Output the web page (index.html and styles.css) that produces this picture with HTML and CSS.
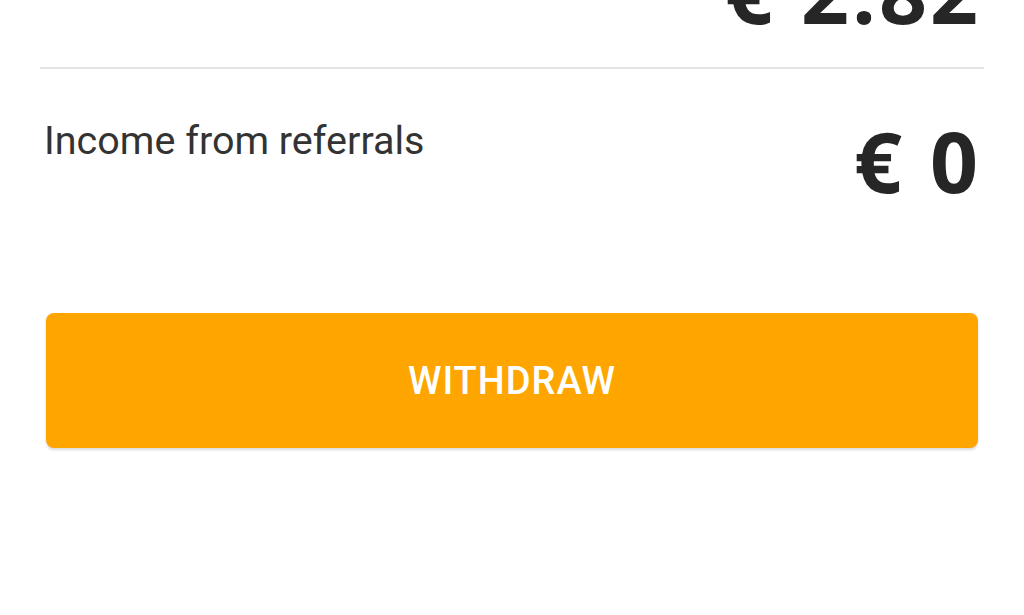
FILE: index.html
```html
<!DOCTYPE html>
<html>
  <head>
    <title>Wallet</title>
    <meta charset="UTF-8" />
    <link rel="stylesheet" href="styles.css">
  </head>
  <body>
    <div class="wrapper">
      <div class="balance">
        <span class="amount">€ 2.82</span>
      </div>
      <div class="line"></div>

      <div class="row">
        <p class="label">Income from referrals</p>
        <span class="amount">€ 0</span>
      </div>

      <button type="button" class="btn">WITHDRAW</button>
    </div>
  </body>
</html>
```

FILE: styles.css
```css
html,
body {
  margin: 0;
  padding: 0;
  background: #fff;
}
.wrapper {
  width: 1024px;
  height: 615px;
  overflow: hidden;
  padding: 0 40px;
  box-sizing: border-box;
}
.amount {
  font-family: "Open Sans", sans-serif;
  font-weight: 700;
  font-size: 84px;
  line-height: 1;
  letter-spacing: 3px;
  color: #262626;
}
.balance {
  text-align: right;
  margin-top: -50px;
  padding-right: 3px;
  height: 82px;
}
.line {
  height: 2px;
  background: #e3e3e3;
  margin-top: 35px;
}
.row {
  display: flex;
  justify-content: space-between;
  align-items: flex-start;
  padding: 0 3px 0 4px;
  margin-top: 52px;
}
.label {
  margin: 0;
  font-family: Roboto, sans-serif;
  font-size: 39.5px;
  line-height: 40px;
  color: #333;
}
.row .amount {
  margin-top: -2px;
}
.btn {
  display: block;
  width: 932px;
  height: 135px;
  margin: 110px 0 0 6px;
  border: 0;
  border-radius: 8px;
  background: #ffa500;
  color: #fff;
  font-family: Roboto, sans-serif;
  font-weight: 500;
  font-size: 38px;
  letter-spacing: 1px;
  box-shadow: 0 2px 3px rgba(0, 0, 0, 0.15);
}
```
